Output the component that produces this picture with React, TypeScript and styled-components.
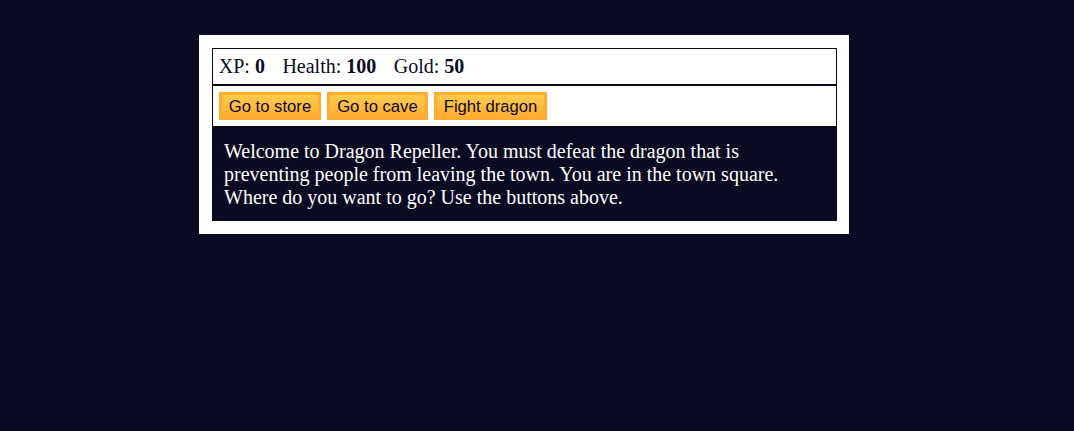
import { Fragment } from 'react';
import styled, { createGlobalStyle } from 'styled-components';

const GlobalStyle = createGlobalStyle`
    html, body {
        margin: 0;
        padding: 0;
        background-color: #0a0a23;
    }
    body {
        padding-right: 26px;
    }
`;

const Game = styled.div`
    width: 625px;
    background-color: #ffffff;
    color: #ffffff;
    margin: 35px auto 0;
    padding: 12.5px;
    font-family: 'Liberation Serif', 'Times New Roman', serif;
    font-size: 20px;
`;

const Panel = styled.div`
    border: 1px solid #0a0a23;
    padding: 6.25px;
    color: #0a0a23;
`;

const Controls = styled(Panel)`
    display: flex;
    gap: 6px;
`;

const Stat = styled.span`
    padding-right: 12.5px;
`;

const Button = styled.button`
    cursor: pointer;
    color: #0a0a23;
    background-color: #feac32;
    background-image: linear-gradient(#fecc4c, #ffac33);
    border: 3.75px solid #feac32;
    font-family: 'Liberation Sans', Arial, sans-serif;
    font-size: 16.67px;
    line-height: 19px;
    padding: 1.25px 7px;
    margin: 0;
`;

const Text = styled.div`
    background-color: #0a0a23;
    color: #ffffff;
    padding: 12.5px;
    line-height: 23px;
`;

const stats: [string, number][] = [
    ['XP', 0],
    ['Health', 100],
    ['Gold', 50],
];

const actions = ['Go to store', 'Go to cave', 'Fight dragon'];

export default function App() {
    return (
        <>
            <GlobalStyle />
            <Game>
                <Panel>
                    {stats.map(([label, value]) => (
                        <Fragment key={label}>
                            <Stat>
                                {label}: <strong>{value}</strong>
                            </Stat>{' '}
                        </Fragment>
                    ))}
                </Panel>
                <Controls>
                    {actions.map((a) => (
                        <Button key={a}>{a}</Button>
                    ))}
                </Controls>
                <Text>
                    Welcome to Dragon Repeller. You must defeat the dragon that is
                    preventing people from leaving the town. You are in the town
                    square. Where do you want to go? Use the buttons above.
                </Text>
            </Game>
        </>
    );
}
